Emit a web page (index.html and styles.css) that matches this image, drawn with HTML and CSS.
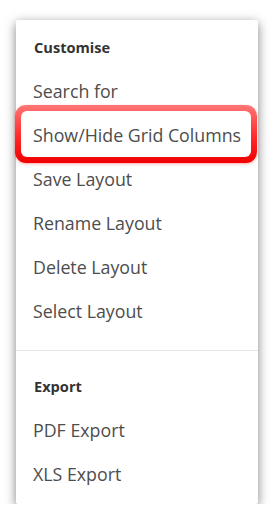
FILE: index.html
```html
<!DOCTYPE html>
<html lang="en">
<head>
    <meta charset="UTF-8">
    <meta name="viewport" content="width=device-width, initial-scale=1.0">
    <title>Grid menu</title>
    <link rel="stylesheet" href="styles.css">
</head>
<body>
    <div class="menu">
        <!-- Customise group -->
        <div class="menu-title">Customise</div>
        <ul class="menu-list">
            <li>Search for</li>
            <li class="highlight">Show/Hide Grid Columns</li>
            <li>Save Layout</li>
            <li>Rename Layout</li>
            <li>Delete Layout</li>
            <li>Select Layout</li>
        </ul>

        <div class="divider"></div>

        <!-- Export group -->
        <div class="menu-title">Export</div>
        <ul class="menu-list">
            <li>PDF Export</li>
            <li>XLS Export</li>
        </ul>
    </div>
</body>
</html>
```

FILE: styles.css
```css
body {
    margin: 0;
    background-color: #ffffff;
    font-family: "Open Sans", "Liberation Sans", sans-serif;
}

.menu {
    width: 242px;
    margin: 20px 0 0 16px;
    padding: 7px 0 8px;
    background-color: #ffffff;
    border-radius: 2px;
    box-shadow: 0 3px 11px rgba(0, 0, 0, 0.5);
}

.menu-title {
    height: 40px;
    line-height: 40px;
    padding-left: 18px;
    font-size: 14.6px;
    font-weight: bold;
    color: #333333;
    margin-bottom: 2px;
}

.menu-list {
    list-style: none;
    margin: 0;
    padding: 0;
}

.menu-list li {
    height: 44px;
    line-height: 44px;
    padding-left: 17px;
    font-size: 17.8px;
    color: #4d4d4d;
    white-space: nowrap;
}

/* red frame round the selected row */
.menu-list li.highlight {
    position: relative;
    z-index: 1;
}

.menu-list li.highlight::before,
.menu-list li.highlight::after {
    content: "";
    position: absolute;
    z-index: -1;
}

.menu-list li.highlight::before {
    top: -8px;
    bottom: -6px;
    left: -1px;
    right: 1px;
    border-radius: 11px;
    background: linear-gradient(#ff7676, #ff2a2a 55%, #f00000);
    box-shadow: 0 1px 3px rgba(255, 0, 0, 0.35);
}

.menu-list li.highlight::after {
    top: -2px;
    bottom: 0;
    left: 5px;
    right: 7px;
    border-radius: 6px;
    background-color: #ffffff;
}

.divider {
    height: 1px;
    background-color: #e6e6e6;
    margin: 17px 0 15px;
}
```
